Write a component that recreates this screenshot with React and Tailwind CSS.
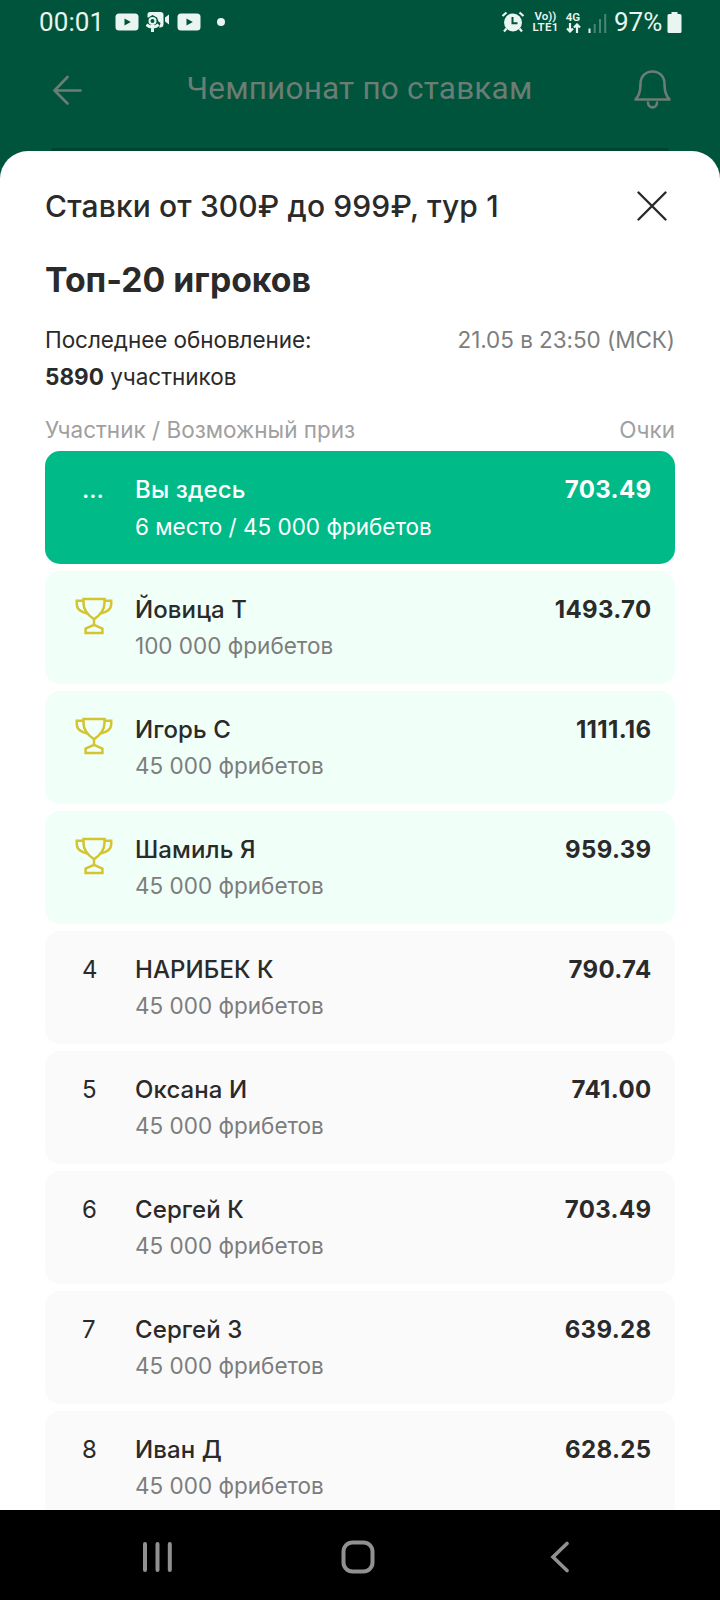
import React from "react";

const players = [
    { place: 1, name: "Йовица Т", prize: "100 000 фрибетов", score: "1493.70" },
    { place: 2, name: "Игорь С", prize: "45 000 фрибетов", score: "1111.16" },
    { place: 3, name: "Шамиль Я", prize: "45 000 фрибетов", score: "959.39" },
    { place: 4, name: "НАРИБЕК К", prize: "45 000 фрибетов", score: "790.74" },
    { place: 5, name: "Оксана И", prize: "45 000 фрибетов", score: "741.00" },
    { place: 6, name: "Сергей К", prize: "45 000 фрибетов", score: "703.49" },
    { place: 7, name: "Сергей З", prize: "45 000 фрибетов", score: "639.28" },
    { place: 8, name: "Иван Д", prize: "45 000 фрибетов", score: "628.25" },
];

const YoutubeIcon = () => (
    <svg width="24" height="18" viewBox="0 0 24 18">
        <rect x="0.5" y="0.5" width="23" height="17" rx="3.5" fill="#e9f5f0" />
        <path d="M9.5 5.5v7l6.3-3.5z" fill="#00543c" />
    </svg>
);

const CameraIcon = () => (
    <svg width="24" height="22" viewBox="0 0 24 22">
        <path d="M4 1h10.500q3 0 3 3v9q0 3.500-3.500 3.500H4q-2.500 0-2.500-2V3.500Q1.500 1 4 1z" fill="#e9f5f0" />
        <path d="M19 6.500l4-3v10l-4-3z" fill="#e9f5f0" />
        <path d="M0 6.500h2.500L6.500 4l4.500 2.500 1.500 4 2 1.500-1.500 5H9V22H0z" fill="#00543c" />
        <circle cx="6.500" cy="10" r="3" fill="none" stroke="#e9f5f0" strokeWidth="2" />
        <path d="M.5 13.500q2 2.500 6 2.500t6-2.500M6.500 14v7" fill="none" stroke="#e9f5f0" strokeWidth="3" />
    </svg>
);

const AlarmIcon = () => (
    <svg width="24" height="22" viewBox="0 0 24 22" fill="none">
        <circle cx="12" cy="11.500" r="9" fill="#e9f5f0" />
        <path d="M1.500 5l4-3.500M22.500 5l-4-3.500M5.500 17.500L3 20.500M18.500 17.500l2.500 3" stroke="#e9f5f0" strokeWidth="2.200" />
        <path d="M11.500 6v6.200h5" stroke="#00543c" strokeWidth="2" />
    </svg>
);

const SignalIcon = () => (
    <svg width="19" height="21" viewBox="0 0 19 21">
        <path d="M.5 16.500h2V21h-2z" fill="#e9f5f0" />
        <path d="M5.700 12h2v9h-2zM11 7h2v14h-2zM16.200 2h2v19h-2z" fill="#4a8571" />
    </svg>
);

const TrophyIcon = () => (
    <svg width="38" height="38" viewBox="0 0 38 38" fill="none" stroke="#d3c432" strokeWidth="2.5">
        <path d="M8.500 1.900h21v4.400c0 7-4 11.700-10.500 16-6.500-4.300-10.500-9-10.500-16z" />
        <path d="M8.500 3.800H1.800v3.900c0 5 4.200 7.300 10.700 8.800M29.500 3.800h6.700v3.900c0 5-4.200 7.300-10.700 8.800" />
        <path d="M19 22v6M10.600 36v-4.500l8.400-3.700 8.400 3.700V36z" />
    </svg>
);

const PlayerRow = ({ player }) => {
    const isTop = player.place <= 3;
    return (
        <div className={`flex h-[112.5px] shrink-0 rounded-[15px] pt-5 pr-[23.5px] ${isTop ? "bg-[#f0fff8]" : "bg-[#fafafa]"}`}>
            <div className="w-[90px] shrink-0">
                {isTop ? (
                    <div className="pl-[30px] pt-[6px]"><TrophyIcon /></div>
                ) : (
                    <div className="pl-[37px] text-2xl leading-[37px]">{player.place}</div>
                )}
            </div>
            <div className="flex-1">
                <p className="text-2xl leading-[37px] font-medium tracking-[0.1px]">{player.name}</p>
                <p className="text-[22.5px] leading-[35px] text-[#7d7d7d]">{player.prize}</p>
            </div>
            <p className="text-2xl leading-[37px] font-bold tracking-[0.35px]">{player.score}</p>
        </div>
    );
};

const StatusBar = () => (
    <div className="flex h-11 items-center pl-[39px] pr-[38px] font-[Roboto,sans-serif] text-[#e9f5f0]">
        <span className="w-[63px] text-[26px] tracking-[0.1px]">00:01</span>
        <div className="flex flex-1 items-center gap-[7px] pl-[13px]">
            <YoutubeIcon />
            <CameraIcon />
            <YoutubeIcon />
            <span className="ml-[9px] size-2 rounded-full bg-[#e9f5f0]" />
        </div>
        <AlarmIcon />
        <div className="ml-[7px] flex w-[27px] flex-col items-center text-[11.5px] leading-[11px] font-semibold whitespace-nowrap">
            <p>Vo))</p>
            <p className="tracking-[0.3px]">LTE1</p>
        </div>
        <div className="ml-1.5 w-4 text-center text-[11.5px] leading-[11px] font-semibold">
            <p>4G</p>
            <svg width="15" height="10" viewBox="0 0 15 10" fill="none" stroke="#e9f5f0" strokeWidth="2.2" className="mx-auto">
                <path d="M4 0v8.500M1 5.500l3 3 3-3M11 10V1.500M8 4.500l3-3 3 3" />
            </svg>
        </div>
        <div className="ml-[7px]"><SignalIcon /></div>
        <span className="ml-[7px] w-[53px] text-[26px]">97%</span>
        <svg width="15" height="21" viewBox="0 0 15 21">
            <path d="M4.500 0h6v2h2.500q1.500 0 1.500 1.500v16q0 1.500-1.500 1.500H2q-1.500 0-1.500-1.500v-16Q.5 2 2 2h2.500z" fill="#e9f5f0" />
        </svg>
    </div>
);

const App = () => {
    return (
        <div className="flex h-[1600px] w-[720px] flex-col overflow-hidden bg-[#00543c] font-[Inter,sans-serif] text-[#2a2a2a]">
            <StatusBar />

            {/* Dimmed page header */}
            <div className="flex h-[104px] shrink-0 items-start justify-between pl-[53px] pr-[48px] text-[#6b7d74]">
                <svg width="30" height="30" viewBox="0 0 30 30" fill="none" stroke="currentColor" strokeWidth="2.6" strokeLinecap="round" strokeLinejoin="round" className="mt-[31px]">
                    <path d="M27.500 15.500H1.500M14.500 2L1.500 15.500l13 13" />
                </svg>
                <h1 className="mt-[25px] ml-[3px] font-[Roboto,sans-serif] text-[31.5px] leading-[40px] tracking-[0.2px]">Чемпионат по ставкам</h1>
                <svg width="39" height="40" viewBox="0 0 39 40" fill="none" stroke="currentColor" strokeWidth="2.6" strokeLinecap="round" strokeLinejoin="round" className="mt-[25px]">
                    <path d="M2.500 30.500c3.500-3.500 5-8 5-15.500C7.500 7.500 12.500 2.500 19.500 2.500S31.500 7.500 31.500 15c0 7.500 1.500 12 5 15.500z" />
                    <path d="M15 33.500c0 6.500 9 6.500 9 0" />
                </svg>
            </div>
            <div className="mx-[51px] h-[3px] shrink-0 rounded-t-[15px] bg-[#00432f]" />

            {/* Bottom sheet */}
            <main className="flex min-h-0 flex-1 flex-col overflow-hidden rounded-t-[28px] bg-white px-[45px] pt-[35px]">
                <div className="flex items-start justify-between pr-[8px]">
                    <h2 className="text-[30px] leading-[40px] font-medium tracking-[0.13px]">Ставки от 300₽ до 999₽, тур 1</h2>
                    <svg width="30" height="30" viewBox="0 0 30 30" stroke="#2a2a2a" strokeWidth="2.4" strokeLinecap="round" className="mt-[4.5px]">
                        <path d="M1.500 1.500l27 27M28.500 1.500l-27 27" />
                    </svg>
                </div>
                <h3 className="mt-[34px] text-[33.75px] leading-[40px] font-bold">Топ-20 игроков</h3>
                <div className="mt-[21px] flex justify-between text-[22.5px] leading-[37px] tracking-[-0.06px]">
                    <p>Последнее обновление:</p>
                    <p className="text-[#7d7d7d]">21.05 в 23:50 (МСК)</p>
                </div>
                <p className="text-[22.5px] leading-[37px]"><b>5890</b> участников</p>
                <div className="mt-[20px] flex justify-between text-[22.5px] leading-[30px] text-[#a0a0a0]">
                    <p>Участник / Возможный приз</p>
                    <p>Очки</p>
                </div>

                <div className="mt-[6px] flex flex-col gap-[7.5px]">
                    <div className="flex h-[112.5px] shrink-0 rounded-[15px] bg-[#00bb87] pt-5 pr-[23.5px] text-white">
                        <div className="w-[90px] shrink-0 pl-[37px] text-2xl leading-[37px] font-medium">...</div>
                        <div className="flex-1">
                            <p className="text-2xl leading-[37px] font-medium tracking-[0.15px]">Вы здесь</p>
                            <p className="text-[22.5px] leading-[37px]">6 место / 45 000 фрибетов</p>
                        </div>
                        <p className="text-2xl leading-[37px] font-bold tracking-[0.35px]">703.49</p>
                    </div>
                    {players.map((player) => (
                        <PlayerRow key={player.place} player={player} />
                    ))}
                </div>
            </main>

            {/* System navigation */}
            <nav className="flex h-[90px] shrink-0 items-center justify-between bg-black pt-[3px] pl-[142px] pr-[150px] text-[#919191]">
                <svg width="31" height="32" viewBox="0 0 31 32" stroke="currentColor" strokeWidth="4" strokeLinecap="round">
                    <path d="M3 3v26M15.500 3v26M27.800 3v26" />
                </svg>
                <svg width="34" height="34" viewBox="0 0 34 34" fill="none" stroke="currentColor" strokeWidth="4" className="mr-[7px]">
                    <rect x="2.500" y="2.500" width="29" height="29" rx="9" />
                </svg>
                <svg width="20" height="32" viewBox="0 0 20 32" fill="none" stroke="currentColor" strokeWidth="3.6" strokeLinecap="round">
                    <path d="M17 2.500L3 16l14 13.500" />
                </svg>
            </nav>
        </div>
    );
};

export default App;
